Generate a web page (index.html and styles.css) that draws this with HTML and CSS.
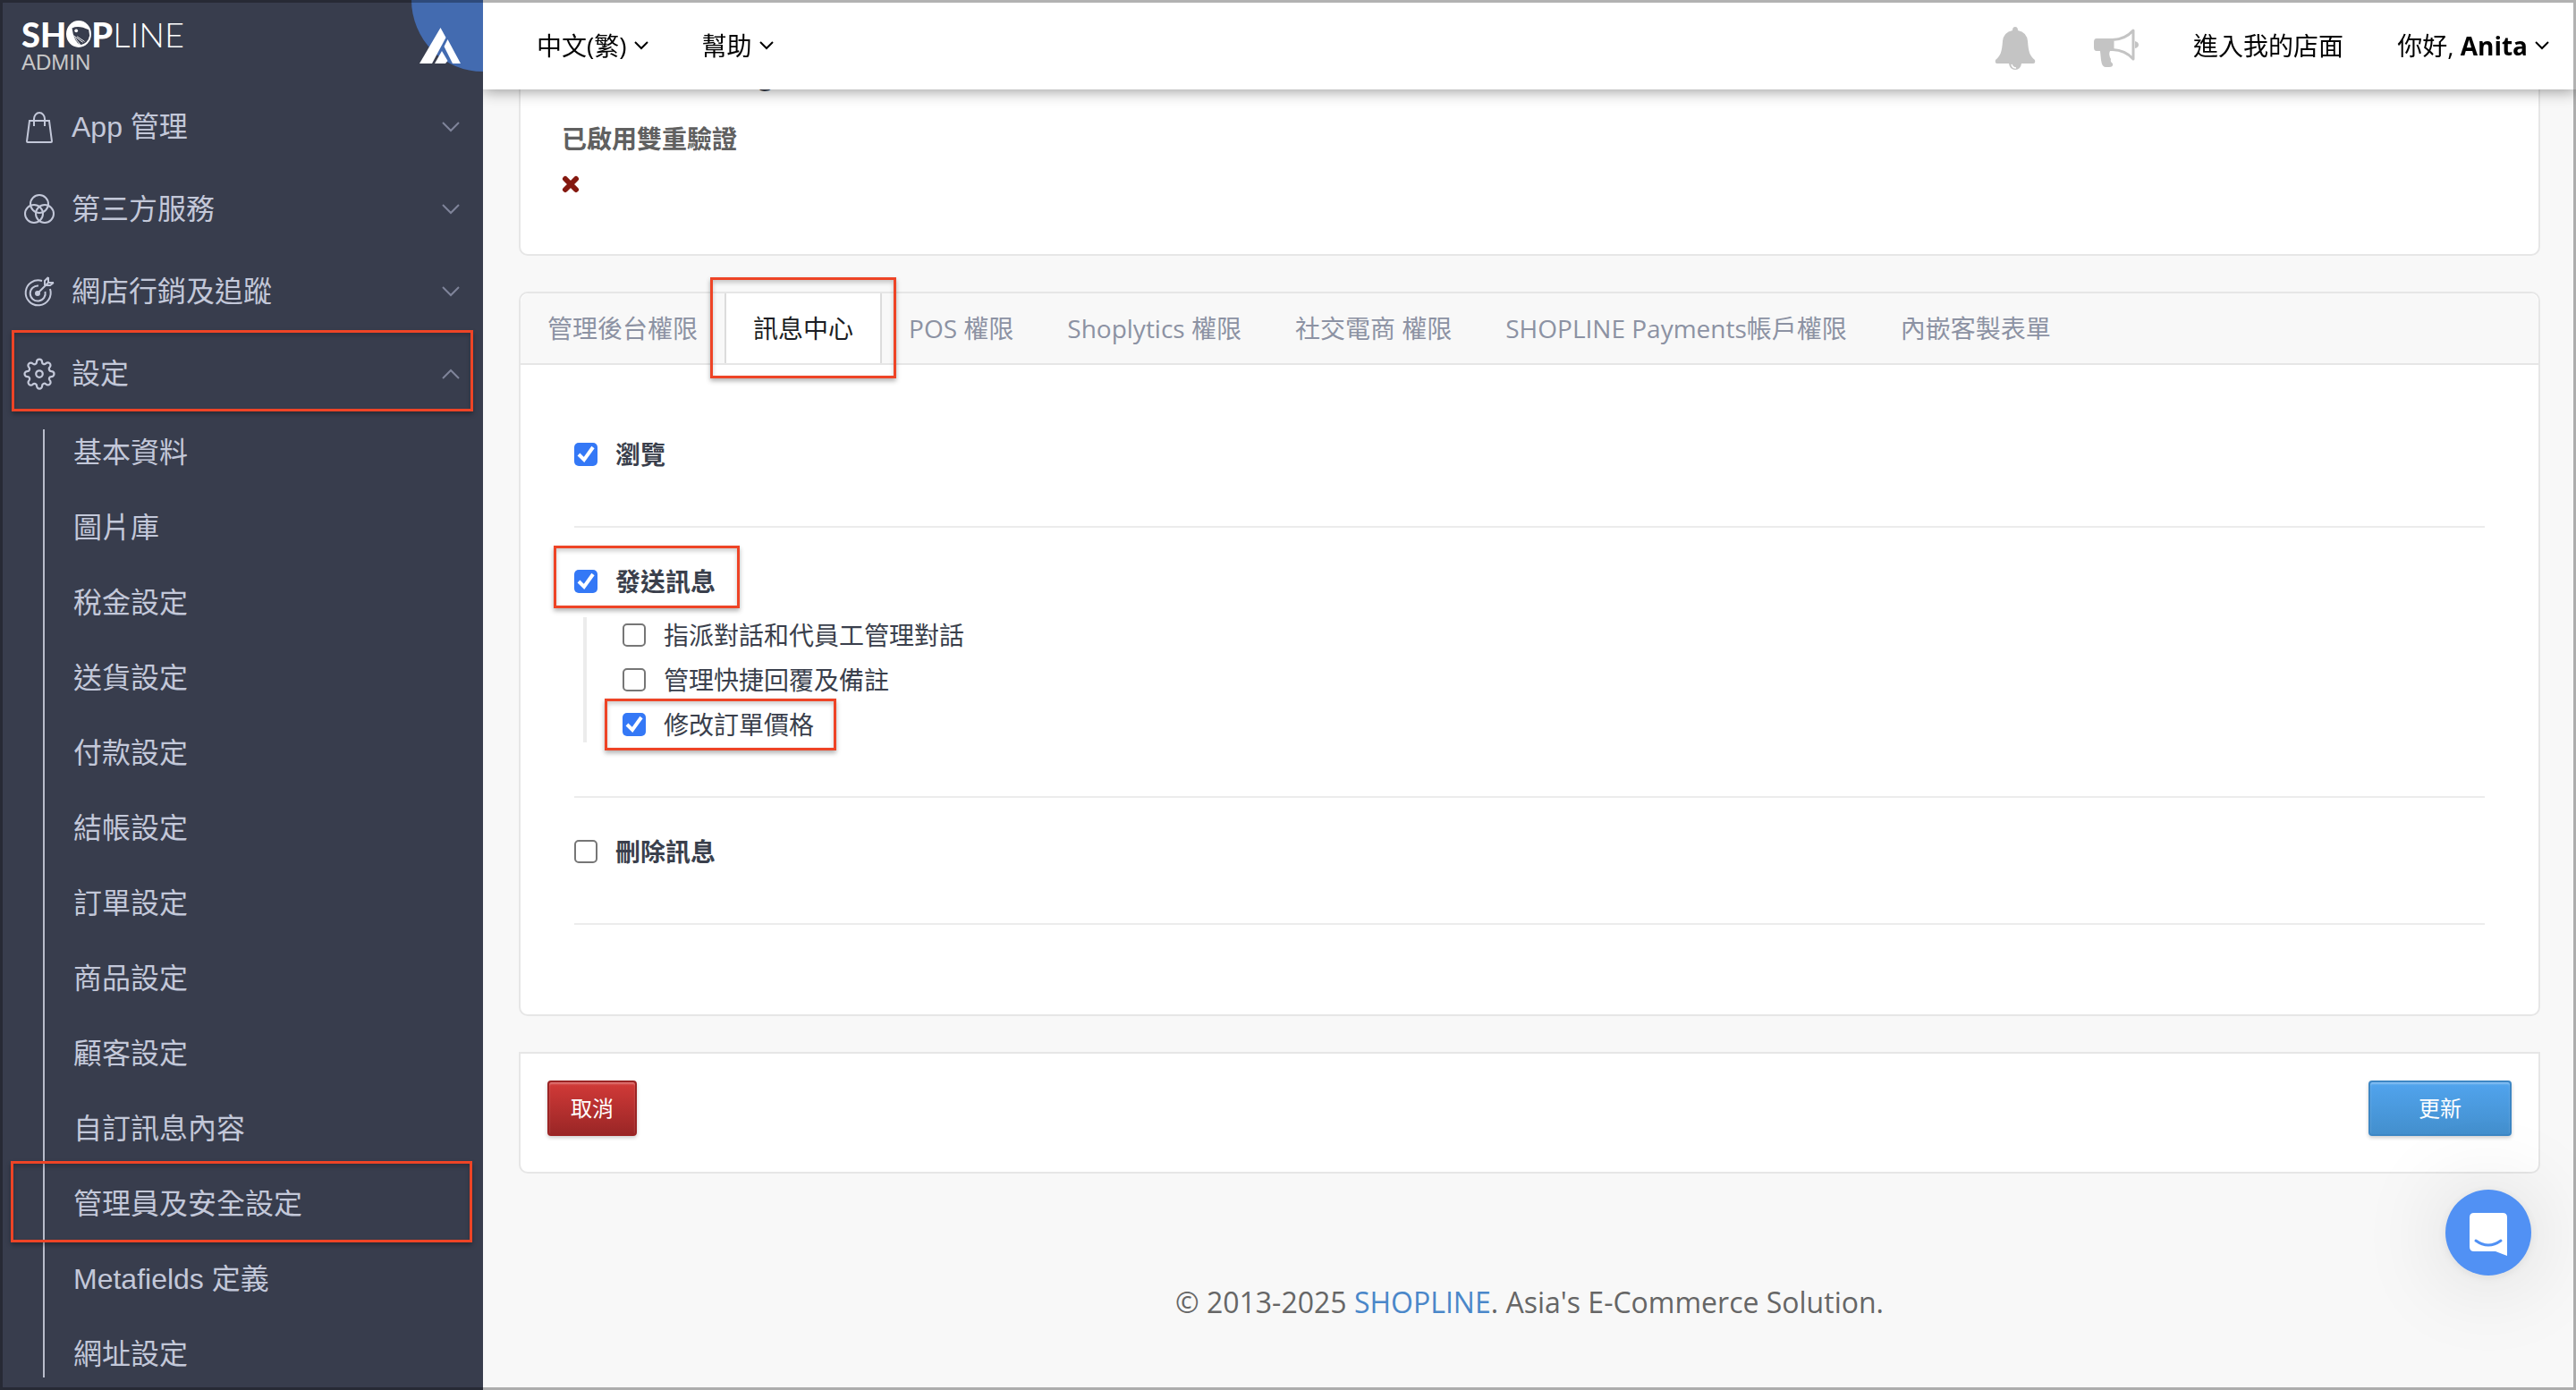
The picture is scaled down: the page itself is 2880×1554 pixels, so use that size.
FILE: index.html
```html
<!DOCTYPE html>
<html lang="zh-Hant">
<head>
    <meta charset="UTF-8">
    <meta name="viewport" content="width=device-width, initial-scale=1.0">
    <title>SHOPLINE Admin</title>
    <link rel="stylesheet" href="styles.css">
</head>
<body>
    <div class="app">
        <aside class="sidebar">
            <div class="brand">
                <a href="#" class="logo">
                    <span class="logo-name">
                        <b>SH</b>
                        <svg class="logo-o" viewBox="0 0 30 32" aria-label="O">
                            <ellipse cx="15" cy="16" rx="15" ry="16" fill="#fff"/>
                            <path d="M7 9 Q15 5 27 11 L28 18 Q26 28 17 29 Q9 25 7 9z" fill="#383d4d"/>
                            <circle cx="12" cy="12" r="2" fill="#fff"/>
                            <path d="M9 18 L20 26 M10 20 L17 29 M13 19 L22 25" stroke="#fff" fill="none"/>
                        </svg>
                        <b>P</b><span class="light">LINE</span>
                    </span>
                    <span class="logo-sub">ADMIN</span>
                </a>
                <a href="#" class="corner" aria-label="App">
                    <svg width="46" height="40" viewBox="0 0 46 40" fill="#fff">
                        <path d="M23.500 0L29.500 11L14 40H0z"/>
                        <path d="M31.500 13L46 40H37L27.500 21z"/>
                        <path d="M25 26L31.500 37L29 40H17z"/>
                    </svg>
                </a>
            </div>
            <nav class="menu">
                <button class="menu-item">
                    <svg class="icon" viewBox="0 0 36 36"><path d="M7 11h22l3 23q0 1-1 1H5q-1 0-1-1z M12 17V9a6 7 0 0 1 12 0v8"/></svg>
                    App 管理
                    <svg class="arrow" viewBox="0 0 20 12"><path d="M1 1l9 9 9-9"/></svg>
                </button>
                <button class="menu-item">
                    <svg class="icon" viewBox="0 0 36 36"><circle cx="18" cy="12" r="10"/><circle cx="12" cy="23" r="10"/><circle cx="24" cy="23" r="10"/></svg>
                    第三方服務
                    <svg class="arrow" viewBox="0 0 20 12"><path d="M1 1l9 9 9-9"/></svg>
                </button>
                <button class="menu-item">
                    <svg class="icon" viewBox="0 0 36 36"><path d="M21 6A14 14 0 1 0 30 15M17 11.500A8.500 8.500 0 1 0 24.500 18M17 19L29 7M28 2v6h6M24 11V6l4-4M25 11h5l4-3"/><circle cx="16" cy="20" r="2" fill="#c3c8d9"/></svg>
                    網店行銷及追蹤
                    <svg class="arrow" viewBox="0 0 20 12"><path d="M1 1l9 9 9-9"/></svg>
                </button>
                <button class="menu-item marked">
                    <svg class="icon gear" viewBox="0 0 24 24"><circle cx="12" cy="12" r="2.500"/><path d="M19.400 15a1.650 1.650 0 0 0 .33 1.820l.06.06a2 2 0 0 1 0 2.830 2 2 0 0 1-2.830 0l-.06-.06a1.650 1.650 0 0 0-1.820-.33 1.650 1.650 0 0 0-1 1.510V21a2 2 0 0 1-2 2 2 2 0 0 1-2-2v-.09A1.650 1.650 0 0 0 9 19.400a1.650 1.650 0 0 0-1.820.33l-.06.06a2 2 0 0 1-2.830 0 2 2 0 0 1 0-2.830l.06-.06a1.650 1.650 0 0 0 .33-1.820 1.650 1.650 0 0 0-1.510-1H3a2 2 0 0 1-2-2 2 2 0 0 1 2-2h.09A1.650 1.650 0 0 0 4.600 9a1.650 1.650 0 0 0-.33-1.820l-.06-.06a2 2 0 0 1 0-2.830 2 2 0 0 1 2.830 0l.06.06a1.650 1.650 0 0 0 1.820.33H9a1.650 1.650 0 0 0 1-1.510V3a2 2 0 0 1 2-2 2 2 0 0 1 2 2v.09a1.650 1.650 0 0 0 1 1.510 1.650 1.650 0 0 0 1.820-.33l.06-.06a2 2 0 0 1 2.830 0 2 2 0 0 1 0 2.830l-.06.06a1.650 1.650 0 0 0-.33 1.820V9a1.650 1.650 0 0 0 1.510 1H21a2 2 0 0 1 2 2 2 2 0 0 1-2 2h-.09a1.650 1.650 0 0 0-1.510 1z"/></svg>
                    設定
                    <svg class="arrow" viewBox="0 0 20 12"><path d="M1 11l9-9 9 9"/></svg>
                </button>
            </nav>
            <nav class="submenu">
                <a href="#">基本資料</a>
                <a href="#">圖片庫</a>
                <a href="#">稅金設定</a>
                <a href="#">送貨設定</a>
                <a href="#">付款設定</a>
                <a href="#">結帳設定</a>
                <a href="#">訂單設定</a>
                <a href="#">商品設定</a>
                <a href="#">顧客設定</a>
                <a href="#">自訂訊息內容</a>
                <a href="#" class="marked">管理員及安全設定</a>
                <a href="#">Metafields 定義</a>
                <a href="#">網址設定</a>
            </nav>
        </aside>

        <div class="page">
            <header class="topbar">
                <button class="top-link">中文(繁)<svg class="caret" viewBox="0 0 16 10"><path d="M1 1l7 7 7-7"/></svg></button>
                <button class="top-link">幫助<svg class="caret" viewBox="0 0 16 10"><path d="M1 1l7 7 7-7"/></svg></button>
                <button class="top-icon bell" aria-label="通知">
                    <svg width="46" height="48" viewBox="0 0 46 48" fill="#c4c4c4">
                        <path d="M20 4Q20 0 23 0T26 4Q36 6 37 16C38 28 39 32 45 37Q46 41 43 41H3Q0 41 1 37C7 32 8 28 9 16Q10 6 20 4z"/>
                        <path d="M16 41H30Q29 48 23 48T16 41z"/>
                        <path d="M19 42Q20 46 24 46" fill="none" stroke="#fff" stroke-width="1.500"/>
                    </svg>
                </button>
                <button class="top-icon horn" aria-label="公告">
                    <svg width="52" height="44" viewBox="0 0 52 44" fill="#c4c4c4">
                        <path d="M4 11H22V25H19Q17 29 20 34Q19 37 22 39Q23 43 18 43H14Q10 43 9 35L8 25H4Q1 25 1 21V15Q1 11 4 11z"/>
                        <path d="M22 12.500Q36 12 45 2V34Q36 24 22 23.500z" fill="#fff" stroke="#c4c4c4" stroke-width="3" stroke-linejoin="round"/>
                        <path d="M47 14Q51 15 51 18T47 22z"/>
                    </svg>
                </button>
                <a href="#" class="top-link shop">進入我的店面</a>
                <button class="top-link user">你好,&nbsp;<b>Anita</b><svg class="caret" viewBox="0 0 16 10"><path d="M1 1l7 7 7-7"/></svg></button>
            </header>

            <main class="content">
                <section class="card profile">
                    <p class="email">g</p>
                    <h2>已啟用雙重驗證</h2>
                    <svg class="cross" viewBox="0 0 20 20"><path d="M4 4l12 12M16 4L4 16"/></svg>
                </section>

                <section class="card permissions">
                    <div class="tabs">
                        <button class="tab">管理後台權限</button>
                        <button class="tab active marked">訊息中心</button>
                        <button class="tab">POS 權限</button>
                        <button class="tab">Shoplytics 權限</button>
                        <button class="tab">社交電商 權限</button>
                        <button class="tab">SHOPLINE Payments帳戶權限</button>
                        <button class="tab">內嵌客製表單</button>
                    </div>
                    <div class="groups">
                        <div class="group">
                            <label class="check main"><input type="checkbox" checked>瀏覽</label>
                        </div>
                        <div class="group">
                            <label class="check main marked"><input type="checkbox" checked>發送訊息</label>
                            <div class="children">
                                <label class="check"><input type="checkbox">指派對話和代員工管理對話</label>
                                <label class="check"><input type="checkbox">管理快捷回覆及備註</label>
                                <label class="check marked"><input type="checkbox" checked>修改訂單價格</label>
                            </div>
                        </div>
                        <div class="group">
                            <label class="check main"><input type="checkbox">刪除訊息</label>
                        </div>
                    </div>
                </section>

                <section class="card actions">
                    <button class="btn cancel">取消</button>
                    <button class="btn update">更新</button>
                </section>

                <footer>© 2013-2025 <a href="#">SHOPLINE</a>. Asia's E-Commerce Solution.</footer>
            </main>
        </div>
    </div>

    <button class="chat" aria-label="Chat">
        <svg width="42" height="48" viewBox="0 0 42 48">
            <path d="M5 0H37Q42 0 42 5V48L29 43H5Q0 43 0 38V5Q0 0 5 0z" fill="#fff"/>
            <path d="M7 31Q21 41 35 31" fill="none" stroke="#5191f4" stroke-width="3" stroke-linecap="round"/>
        </svg>
    </button>
</body>
</html>
```
FILE: styles.css
```css
* {
    box-sizing: border-box;
}
body {
    margin: 0;
    font-family: "Open Sans", "Noto Sans CJK TC", sans-serif;
    font-size: 28px;
    line-height: 40px;
    background: #f8f8f8;
    color: #3a3f4c;
}
/* thin frame round the window */
body::after {
    content: "";
    position: fixed;
    inset: 0;
    border: 3px solid rgba(0, 0, 0, 0.3);
    pointer-events: none;
    z-index: 20;
}
button {
    font: inherit;
    color: inherit;
    background: none;
    border: none;
    padding: 0;
    cursor: pointer;
}
a {
    color: inherit;
    text-decoration: none;
}
.app {
    display: flex;
    min-height: 100vh;
}

/* sidebar */
.sidebar {
    flex: 0 0 540px;
    background: #383d4d;
    color: #c3c8d9;
    font-family: "Liberation Sans", "Noto Sans CJK TC", sans-serif;
    font-size: 32px;
}
.brand {
    display: flex;
    justify-content: space-between;
    height: 96px;
}
.logo {
    padding: 20px 0 0 24px;
    color: #fff;
    font-family: Lato, sans-serif;
}
.logo-name {
    display: flex;
    align-items: center;
    font-size: 38px;
    line-height: 36px;
}
.logo-name b {
    font-weight: 900;
}
.logo-name .light {
    font-weight: 300;
}
.logo-o {
    width: 28px;
    height: 30px;
}
.logo-sub {
    display: block;
    font-family: "Liberation Sans", sans-serif;
    font-size: 24px;
    line-height: 28px;
    color: #c8c8c8;
}
.corner {
    width: 80px;
    height: 80px;
    padding: 31px 0 0 9px;
    background: #436bb0;
    border-bottom-left-radius: 80px;
    line-height: 0;
}
.menu-item {
    display: flex;
    align-items: center;
    width: 100%;
    height: 92px;
    padding: 0 26px;
    gap: 18px;
    position: relative;
}
.icon {
    width: 36px;
    height: 36px;
    fill: none;
    stroke: #c3c8d9;
    stroke-width: 2;
}
.gear {
    stroke-width: 1.5;
}
.arrow {
    width: 20px;
    height: 12px;
    margin-left: auto;
    fill: none;
    stroke: #7f849a;
    stroke-width: 2;
}
.submenu {
    display: flex;
    flex-direction: column;
    gap: 32px;
    margin: 16px 0 14px 48px;
    border-left: 2px solid #b9bdcb;
}
.submenu a {
    padding-left: 32px;
    line-height: 52px;
    position: relative;
}

/* red outlines */
.marked {
    position: relative;
}
.marked::before {
    content: "";
    position: absolute;
    inset: -16px;
    border: 3px solid #ee4426;
    box-shadow: 0 3px 5px rgba(0, 0, 0, 0.3), inset 0 3px 5px rgba(0, 0, 0, 0.2);
    pointer-events: none;
    z-index: 2;
}
.menu-item.marked::before {
    inset: -3px 11px 4px 13px;
}
.submenu .marked::before {
    inset: -22px 12px -17px -38px;
}
.tab.marked::before {
    inset: -18px -18px -17px;
}
.check.main.marked::before {
    inset: -20px -27px -10px -23px;
}
.children .marked::before {
    inset: -9px -25px -9px -20px;
}

/* top bar */
.page {
    flex: 1;
    min-width: 0;
}
.topbar {
    position: fixed;
    top: 0;
    left: 540px;
    right: 0;
    display: flex;
    align-items: center;
    height: 100px;
    padding: 2px 30px 0 60px;
    background: #fff;
    color: #000;
    box-shadow: 0 2px 16px rgba(0, 0, 0, 0.4);
    clip-path: inset(0 0 -30px 0);
    z-index: 10;
}
.top-link {
    display: flex;
    align-items: center;
    margin-right: 60px;
}
.top-link.shop {
    margin-left: 60px;
}
.top-link.user {
    margin-right: 0;
}
.top-icon {
    line-height: 0;
}
.bell {
    margin-left: auto;
    margin-top: 6px;
}
.horn {
    margin: 6px 0 0 64px;
}
.caret {
    width: 16px;
    height: 10px;
    margin-left: 8px;
    fill: none;
    stroke: #000;
    stroke-width: 2;
}

/* cards */
.content {
    padding: 0 40px;
}
.card {
    background: #fff;
    border: 2px solid #e6e6e6;
    border-radius: 10px;
    margin-bottom: 40px;
}
.profile {
    border-top: none;
    padding: 64px 46px 58px;
}
.email {
    margin: 0 0 31px;
    padding-left: 220px;
    font-weight: 600;
}
.profile h2 {
    margin: 0 0 21px;
    font-size: 28px;
    color: #606060;
}
.cross {
    display: block;
    width: 20px;
    height: 20px;
    margin-bottom: 10px;
    stroke: #84180f;
    stroke-width: 6;
    stroke-linecap: round;
}
.permissions {
    margin-top: 40px;
}
.tabs {
    display: flex;
    height: 80px;
    background: #f8f8f8;
    border-bottom: 2px solid #e6e6e6;
    border-radius: 10px 10px 0 0;
}
.tab {
    padding: 0 30px;
    color: #8c92a3;
    white-space: nowrap;
}
.tab.active {
    background: #fff;
    color: #1b1d23;
    border: solid #dcdcdc;
    border-width: 0 2px;
}
.groups {
    padding: 40px 60px 100px;
}
.group {
    padding: 40px 0 60px;
    border-bottom: 2px solid #ececec;
}
.check {
    display: flex;
    align-items: center;
    gap: 20px;
    width: fit-content;
    height: 40px;
}
.check.main {
    font-weight: 700;
}
.check input {
    appearance: none;
    width: 26px;
    height: 26px;
    margin: 0;
    border: 2px solid #767676;
    border-radius: 5px;
    background: #fff;
}
.check input:checked {
    border: none;
    background: #3478f6 url("data:image/svg+xml,%3Csvg xmlns='http://www.w3.org/2000/svg' viewBox='0 0 26 26'%3E%3Cpath d='M5 13l6 6L21 5' fill='none' stroke='white' stroke-width='4'/%3E%3C/svg%3E");
}
.children {
    display: flex;
    flex-direction: column;
    gap: 10px;
    margin: 20px 0 0 10px;
    padding-left: 40px;
    border-left: 4px solid #ececec;
}
.actions {
    display: flex;
    justify-content: space-between;
    padding: 30px 30px 40px;
    border-radius: 0 0 10px 10px;
}
.btn {
    height: 62px;
    border-radius: 4px;
    color: #fff;
    font-size: 24px;
    box-shadow: 0 2px 4px rgba(0, 0, 0, 0.2), inset 0 2px 2px rgba(255, 255, 255, 0.3);
}
.cancel {
    width: 100px;
    border: 2px solid #9b2424;
    background: linear-gradient(#d23a38, #9a2626);
}
.update {
    width: 160px;
    border: 2px solid #3d87c5;
    background: linear-gradient(#51a4ee, #438fcd);
}
footer {
    padding: 84px 0 76px;
    text-align: center;
    font-size: 32px;
    color: #666;
}
footer a {
    color: #4a87c9;
}

/* chat bubble */
.chat {
    position: fixed;
    right: 50px;
    bottom: 128px;
    width: 96px;
    height: 96px;
    padding-top: 4px;
    border-radius: 50%;
    background: #5191f4;
    line-height: 0;
    box-shadow: 0 2px 12px rgba(0, 0, 0, 0.08), 0 4px 100px rgba(0, 0, 0, 0.15);
}
```
